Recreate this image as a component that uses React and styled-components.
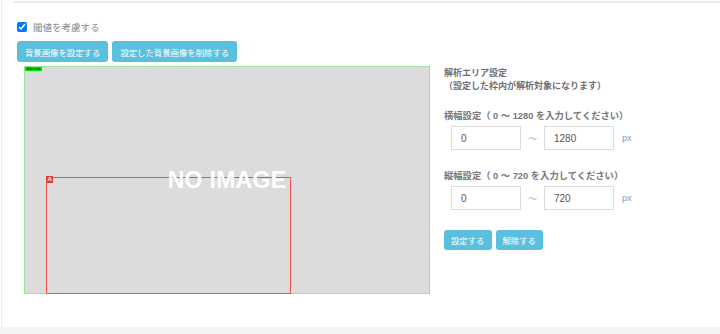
import React from "react";
import styled, { createGlobalStyle } from "styled-components";

const GlobalStyle = createGlobalStyle`
  body {
    margin: 0;
    background: #f4f4f4;
    font-family: "Liberation Sans", "Noto Sans CJK JP", sans-serif;
  }
`;

const Page = styled.div`
  background: #fff;
  height: 327px;
  padding-left: 1px;
`;

const Panel = styled.div`
  height: 100%;
  border-left: 1px solid #ececec;
  box-sizing: border-box;
`;

const TopCard = styled.div`
  height: 1px;
  margin-left: 12px;
  border-bottom: 1px solid #e4e4e4;
  box-shadow: 0 1px 2px rgba(0, 0, 0, 0.08);
`;

const Content = styled.div`
  padding-left: 15px;
`;

const CheckRow = styled.label`
  display: flex;
  align-items: center;
  gap: 6px;
  margin-top: 19px;
  height: 12px;
  font-size: 9.5px;
  color: #888;
`;

const Check = styled.input`
  width: 10px;
  height: 10px;
  margin: 0;
`;

const ButtonRow = styled.div`
  display: flex;
  gap: ${(p) => p.$gap || 4}px;
  margin-top: ${(p) => p.$top || 0}px;
`;

const InfoButton = styled.button`
  height: ${(p) => p.$h || 21}px;
  padding: 0 ${(p) => p.$pad || 8}px;
  border: none;
  border-radius: 3px;
  background: #5bc0de;
  color: #fff;
  font-family: "Noto Sans CJK JP", sans-serif;
  font-size: 8.4px;
  cursor: pointer;
`;

const Main = styled.div`
  display: flex;
  margin-top: 4px;
`;

const Canvas = styled.div`
  position: relative;
  margin-left: 7px;
  width: 406px;
  height: 228px;
  box-sizing: border-box;
  border: 1px solid #9ee39a;
  background: #dcdcdc;
  display: flex;
  align-items: center;
  justify-content: center;
`;

const NoImage = styled.div`
  position: relative;
  z-index: 1;
  color: #fff;
  font-family: "Liberation Sans", sans-serif;
  font-weight: bold;
  font-size: 23px;
  letter-spacing: 0.3px;
`;

const Tag = styled.span`
  position: absolute;
  z-index: 2;
  left: ${(p) => p.$left}px;
  top: ${(p) => p.$top}px;
  height: ${(p) => p.$h}px;
  padding: 0 ${(p) => p.$pad}px;
  background: ${(p) => p.$bg};
  color: ${(p) => p.$fg};
  font-size: ${(p) => p.$fs}px;
  line-height: ${(p) => p.$h}px;
  font-weight: bold;
  white-space: nowrap;
`;

const Region = styled.div`
  position: absolute;
  left: 21px;
  top: 110px;
  width: 245px;
  bottom: -1px;
  box-sizing: border-box;
  border: 1px solid #f25050;
`;

const Side = styled.div`
  margin-left: 14px;
  color: #777;
  font-family: "Liberation Sans", "Noto Sans CJK JP", sans-serif;
`;

const Heading = styled.div`
  margin-top: 1px;
  font-size: 9px;
  font-weight: bold;
  line-height: 13px;
  color: #6f6f6f;
`;

const FieldLabel = styled.div`
  margin-top: ${(p) => p.$top}px;
  font-size: 9.3px;
  font-weight: bold;
  line-height: 13px;
`;

const InputRow = styled.div`
  display: flex;
  align-items: center;
  margin-top: 3px;
  padding-left: 7px;
`;

const NumInput = styled.input`
  width: 70px;
  height: 24px;
  box-sizing: border-box;
  border: 1px solid #dcdcdc;
  padding: 0 9px;
  font-family: "Liberation Sans", sans-serif;
  font-size: 10px;
  color: #555;
  outline: none;
`;

const Tilde = styled.span`
  width: 23px;
  text-align: center;
  font-size: 9px;
  color: #b0b0b0;
`;

const Unit = styled.span`
  margin-left: 8px;
  font-size: 9px;
  color: #8a97b0;
`;

export default function App() {
  return (
    <>
      <GlobalStyle />
      <Page>
        <Panel>
          <TopCard />
          <Content>
            <CheckRow>
              <Check type="checkbox" defaultChecked />
              閾値を考慮する
            </CheckRow>
            <ButtonRow $top={8}>
              <InfoButton>背景画像を設定する</InfoButton>
              <InfoButton>設定した背景画像を削除する</InfoButton>
            </ButtonRow>
            <Main>
              <Canvas>
                <Tag $left={0} $top={0} $h={4} $pad={2} $bg="#00e000" $fg="#0a5a0a" $fs={3}>
                  Max area
                </Tag>
                <NoImage>NO IMAGE</NoImage>
                <Region />
                <Tag $left={21} $top={109} $h={7} $pad={1.5} $bg="#e63a3a" $fg="#fff" $fs={6}>
                  A
                </Tag>
              </Canvas>
              <Side>
                <Heading>
                  解析エリア設定
                  <br />
                  （設定した枠内が解析対象になります）
                </Heading>
                <FieldLabel $top={17}>横幅設定（ 0 ～ 1280 を入力してください）</FieldLabel>
                <InputRow>
                  <NumInput defaultValue="0" />
                  <Tilde>～</Tilde>
                  <NumInput defaultValue="1280" />
                  <Unit>px</Unit>
                </InputRow>
                <FieldLabel $top={20}>縦幅設定（ 0 ～ 720 を入力してください）</FieldLabel>
                <InputRow>
                  <NumInput defaultValue="0" />
                  <Tilde>～</Tilde>
                  <NumInput defaultValue="720" />
                  <Unit>px</Unit>
                </InputRow>
                <ButtonRow $top={20}>
                  <InfoButton $h={20} $pad={7}>設定する</InfoButton>
                  <InfoButton $h={20} $pad={7}>解除する</InfoButton>
                </ButtonRow>
              </Side>
            </Main>
          </Content>
        </Panel>
      </Page>
    </>
  );
}
